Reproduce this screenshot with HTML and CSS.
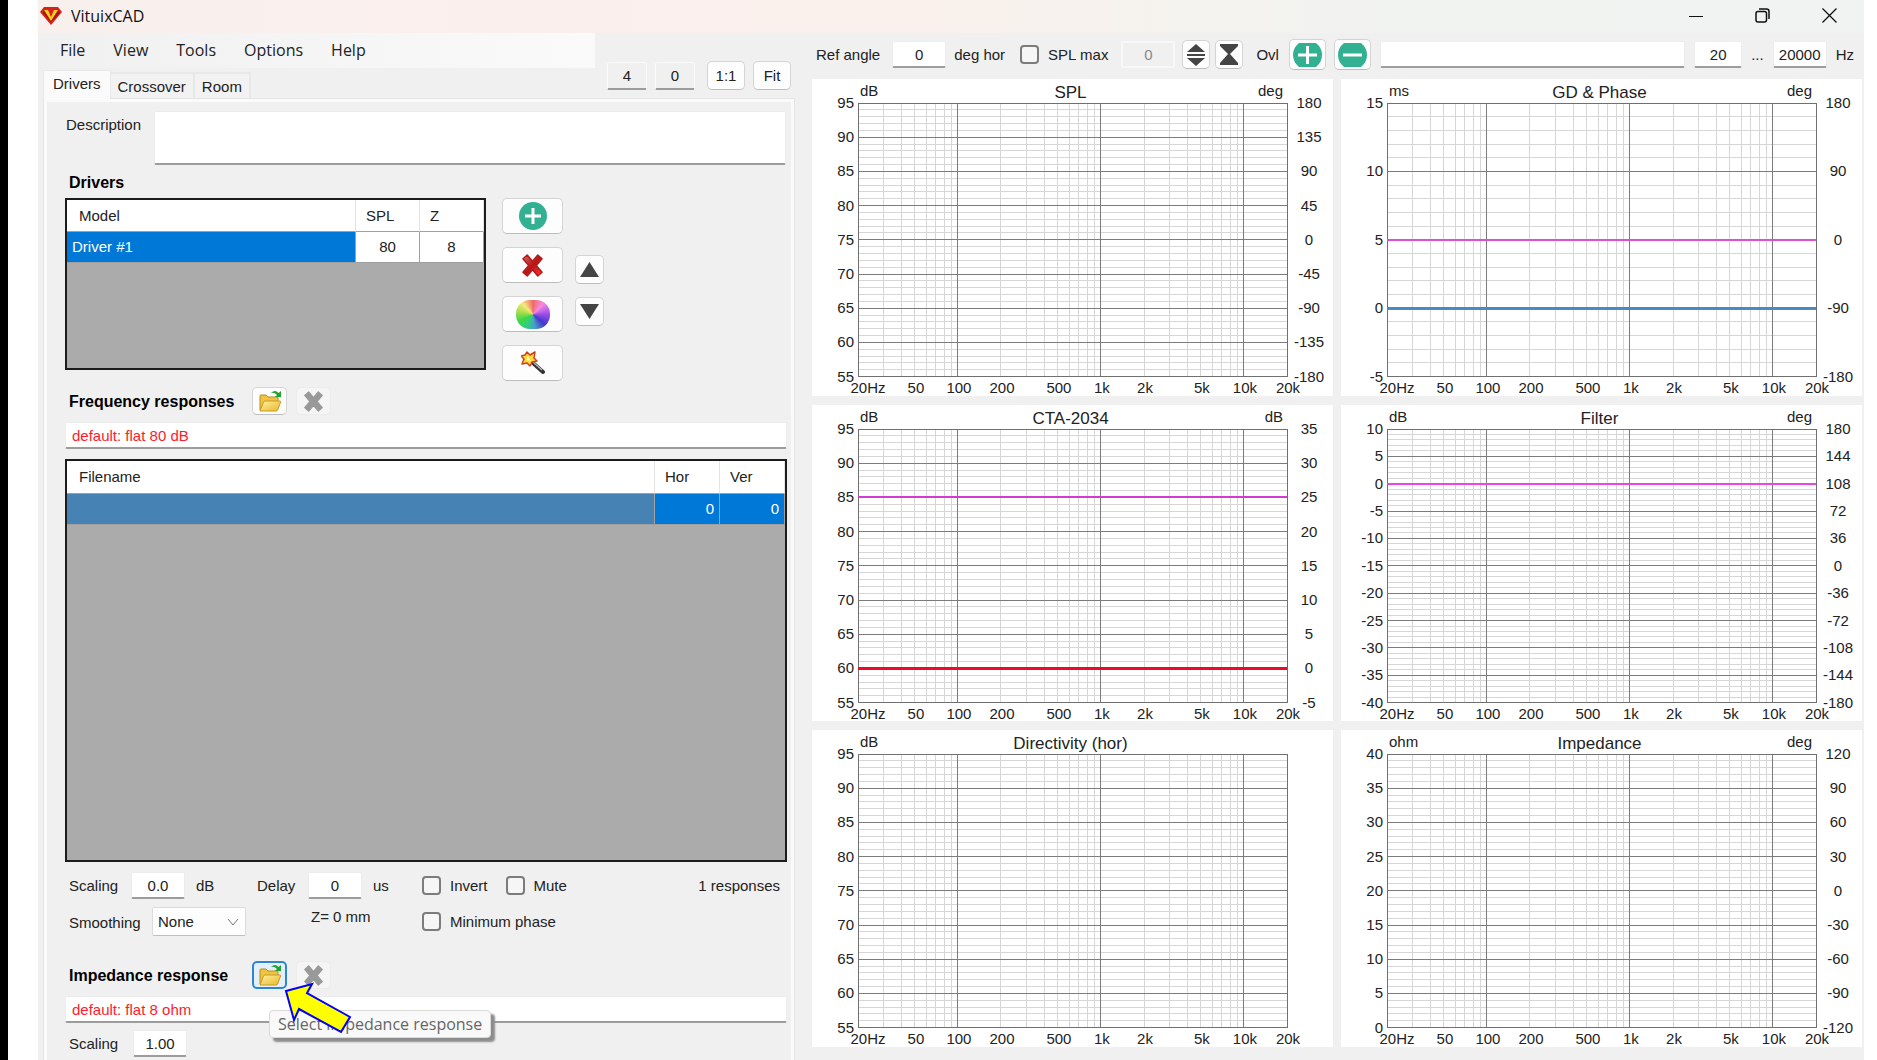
FILE: index.html
```html
<!DOCTYPE html>
<html lang="en">
<head>
<meta charset="utf-8">
<title>VituixCAD</title>
<link rel="stylesheet" href="styles.css">
</head>
<body>
<svg class="defs" aria-hidden="true">
  <linearGradient id="gold" x1="0" y1="0" x2="1" y2="1"><stop offset="0" stop-color="#fff3a0"/><stop offset="1" stop-color="#eab52a"/></linearGradient>
  <linearGradient id="red" x1="0" y1="0" x2="1" y2="1"><stop offset="0" stop-color="#d86a68"/><stop offset=".5" stop-color="#b81414"/><stop offset="1" stop-color="#ff3a3a"/></linearGradient>
  <symbol id="folder" viewBox="0 0 24 24">
    <path d="M2 21V7q0-1 1-1h5l2 2h9q1 0 1 1v3" fill="#f0c440" stroke="#b98d1e"/>
    <path d="M2 22 5.500 13q.4-1 1.500-1h15q1 0 .6 1l-3 8q-.4 1-1.500 1z" fill="url(#gold)" stroke="#c79a22"/>
    <path d="M13 4q4-4 7.500 0L23 2v6h-6l2-2q-2.500-3-6-2z" fill="#1fa32c"/>
  </symbol>
  <symbol id="cross" viewBox="0 0 24 24">
    <path d="M2 5 6.500 1 12 7.500 17.500 1 22 5 16 12l6 7-4.500 4-5.500-6.500L6.500 23 2 19l6-7z" stroke-linejoin="round" stroke-width="1.500" stroke="currentColor"/>
  </symbol>
</svg>
<div class="window">
  <header class="titlebar">
    <svg class="logo" viewBox="0 0 22 18"><path d="M4 0h14l4 5-11 13L0 5z" fill="#d8201c"/><path d="M4 3h14l2 3-9 9-8-9z" fill="#a8120e"/><path d="M4 3h5l2 6 2-6h5l-7 11z" fill="#f6d21c"/><path d="M8 3h6l-3 7z" fill="#d8201c"/></svg>
    <h1 class="title">VituixCAD</h1>
    <div class="winbtns">
      <button aria-label="Minimize"><svg width="14" height="14"><path d="M0 7.500h14" stroke="#111"/></svg></button>
      <button aria-label="Restore"><svg width="15" height="15" fill="none" stroke="#111" stroke-width="1.500"><rect x="1" y="3.500" width="10.500" height="10.500" rx="2"/><path d="M4 1h7.500q2.500 0 2.500 2.500V11"/></svg></button>
      <button aria-label="Close"><svg width="15" height="15"><path d="M.5.5l14 14M14.500.5l-14 14" stroke="#111" stroke-width="1.300"/></svg></button>
    </div>
  </header>
  <div class="workspace">
    <section class="left">
      <div class="top">
        <div class="navs">
          <nav class="menu"><a href="#file">File</a><a href="#view">View</a><a href="#tools">Tools</a><a href="#options">Options</a><a href="#help">Help</a></nav>
          <div class="tabs" role="tablist">
            <button class="tab active" role="tab" aria-selected="true">Drivers</button><button class="tab" role="tab">Crossover</button><button class="tab" role="tab">Room</button>
          </div>
        </div>
        <div class="zoomers">
          <input class="field grey" aria-label="Columns" value="4"><input class="field grey" aria-label="Rows" value="0">
          <button class="btn one">1:1</button><button class="btn">Fit</button>
        </div>
      </div>
      <div class="panel">
        <div class="description"><label for="desc">Description</label><textarea id="desc" class="field"></textarea></div>
        <h2 class="heading solo">Drivers</h2>
        <div class="drivers">
          <div class="grid driver-grid">
            <table>
              <colgroup><col><col class="c-spl"><col class="c-z"></colgroup>
              <thead><tr><th>Model</th><th>SPL</th><th>Z</th></tr></thead>
              <tbody><tr><td class="sel">Driver #1</td><td class="mid">80</td><td class="mid">8</td></tr></tbody>
            </table>
          </div>
          <div class="actions">
            <button class="btn" aria-label="Add driver"><svg width="28" height="28"><circle cx="14" cy="14" r="14" fill="#32b092"/><path d="M14 6v16M6 14h16" stroke="#fff" stroke-width="3"/></svg></button>
            <button class="btn danger" aria-label="Delete driver"><svg width="23" height="23"><use href="#cross" fill="url(#red)"/></svg></button>
            <button class="btn" aria-label="Colour"><span class="wheel"></span></button>
            <button class="btn" aria-label="Optimize"><svg width="24" height="24" viewBox="0 0 24 24"><path d="M12 12l10 9" stroke="#333" stroke-width="4" stroke-linecap="round"/><path d="M12 11l9 8" stroke="#b5b5b5" stroke-width="1.500"/><path d="M6 1l3 3 5-3-1 6 3 3-5 1-2 4-3-3-5 1 2-5-3-3 4-1z" fill="#ffd83a" stroke="#cf3f22" stroke-width="1.500" stroke-linejoin="round"/><path d="M7 5l3 5-5-1z" fill="#fff7b0"/></svg></button>
          </div>
          <div class="movers">
            <button class="btn" aria-label="Move up"><svg width="19" height="15"><path d="M9.500 0 19 15H0z" fill="#444"/></svg></button>
            <button class="btn" aria-label="Move down"><svg width="19" height="15"><path d="M0 0h19L9.500 15z" fill="#444"/></svg></button>
          </div>
        </div>
        <div class="heading-row">
          <h2 class="heading">Frequency responses</h2>
          <button class="btn file" aria-label="Open responses"><svg width="24" height="24"><use href="#folder"/></svg></button>
          <button class="btn file off" disabled aria-label="Clear responses"><svg width="23" height="21"><use href="#cross"/></svg></button>
        </div>
        <input class="field path" aria-label="Frequency response" value="default: flat 80 dB">
        <div class="grid response-grid">
          <table>
            <colgroup><col><col class="c-ang"><col class="c-ang"></colgroup>
            <thead><tr><th>Filename</th><th>Hor</th><th>Ver</th></tr></thead>
            <tbody><tr><td class="steel"></td><td class="sel num">0</td><td class="sel num">0</td></tr></tbody>
          </table>
        </div>
        <div class="controls">
          <div class="ga"><label for="sc" class="lbl">Scaling</label><input id="sc" class="field n54" value="0.0"><span class="unit">dB</span></div>
          <div class="gb"><label for="dl" class="delay">Delay</label><input id="dl" class="field n54" value="0"><span class="unit">us</span></div>
          <label class="check"><input type="checkbox">Invert</label>
          <label class="check"><input type="checkbox">Mute</label>
          <output class="count">1 responses</output>
        </div>
        <div class="controls second">
          <div class="ga"><label for="sm" class="lbl wide">Smoothing</label><select id="sm" class="select"><option>None</option></select></div>
          <div class="gb"><output class="zmm">Z= 0 mm</output></div>
          <label class="check"><input type="checkbox">Minimum phase</label>
        </div>
        <div class="heading-row impedance">
          <h2 class="heading">Impedance response</h2>
          <button class="btn file hot" aria-label="Select impedance response"><svg width="24" height="24"><use href="#folder"/></svg></button>
          <button class="btn file off" disabled aria-label="Clear impedance"><svg width="23" height="21"><use href="#cross"/></svg></button>
          <div class="tooltip" role="tooltip">Select impedance response</div>
          <svg class="arrow" width="70" height="54"><path d="M3 10 29 3 24 12 67 36 58 51 16 28 11 39z" fill="#ff0" stroke="#00f" stroke-width="2"/></svg>
        </div>
        <input class="field path" aria-label="Impedance response" value="default: flat 8 ohm">
        <div class="controls"><div class="ga"><label for="is" class="lbl imp">Scaling</label><input id="is" class="field n54" value="1.00"></div></div>
      </div>
    </section>
    <section class="right">
      <div class="toolbar">
        <label for="ref">Ref angle</label><input id="ref" class="field n54 ref" value="0"><span class="deg">deg hor</span>
        <label class="check"><input type="checkbox">SPL max</label>
        <input class="field n54 disabled" aria-label="SPL maximum" value="0" disabled>
        <button class="btn mini first" aria-label="Expand"><svg width="20" height="22" fill="#444"><path d="M10 0l9 8H1zM1 10h18v2H1zM1 14h18l-9 8z"/></svg></button>
        <button class="btn mini" aria-label="Compress"><svg width="20" height="22" fill="#444"><path d="M1 0h18v2l-8 8 8 9v2H1v-2l8-9-8-8z"/></svg></button>
        <span class="ovl">Ovl</span>
        <button class="btn round" aria-label="Add overlay"><svg width="29" height="24"><path d="M6 0h17q6 5 6 12t-6 12H6q-6-5-6-12T6 0z" fill="#32b092"/><path d="M14.500 3v18M5 12h19" stroke="#fff" stroke-width="3"/></svg></button>
        <button class="btn round" aria-label="Remove overlay"><svg width="29" height="24"><path d="M6 0h17q6 5 6 12t-6 12H6q-6-5-6-12T6 0z" fill="#32b092"/><path d="M5 12h19" stroke="#fff" stroke-width="3"/></svg></button>
        <input class="field grow" aria-label="Overlay name">
        <input class="field n48" aria-label="Minimum frequency" value="20"><span class="dots">...</span><input class="field n54" aria-label="Maximum frequency" value="20000"><span class="hz">Hz</span>
      </div>
      <div class="charts" id="charts"></div>
    </section>
  </div>
</div>
<script src="charts.js"></script>
</body>
</html>
```
FILE: styles.css
```css
* { box-sizing: border-box; }
body {
  margin: 0; height: 100vh; overflow: hidden; background: #fff;
  border-left: 8px solid #000; padding: 0 13px 0 30px;
  font: 15px/20px "Liberation Sans", Arial, sans-serif; color: #222;
}
button, input, select, textarea { font: inherit; color: inherit; margin: 0; }
button { padding: 0; }
svg { display: block; }
.defs { position: absolute; width: 0; height: 0; }
.window { height: 100%; background: #f0f0f0; display: flex; flex-direction: column; }
.titlebar {
  flex: none; height: 33px; display: flex; align-items: center; padding: 0 27px 2px 2px;
  background: linear-gradient(90deg, #f8f0ed, #fbefed 30%, #f9f1ec 50%, #f2f3f0 70%, #f0f3f2);
}
.logo { width: 22px; height: 18px; }
.title { margin: 0 auto 0 9px; font: 16px/20px "Open Sans", sans-serif; color: #111; }
.winbtns { display: flex; gap: 24px; }
.winbtns button { width: 43px; height: 30px; border: 0; background: none; display: grid; place-items: center; }
.winbtns button:last-child { margin-right: -14px; }
.workspace { flex: 1; min-height: 0; display: grid; grid-template-columns: minmax(0, 774fr) minmax(0, 1052fr); }

.left { min-height: 0; overflow: hidden; padding: 0 17px 0 0; }
.top { display: flex; height: 65px; }
.navs { flex: 1; display: flex; flex-direction: column; justify-content: space-between; }
.menu {
  height: 35px; margin-right: 12px; padding: 0 0 2px 22px; display: flex; align-items: center; gap: 28px;
  background: linear-gradient(90deg, #f0f0f0, #fafafa); font: 16px/20px "Open Sans", sans-serif;
}
.menu a { color: #222; text-decoration: none; }
.tabs { display: flex; align-items: flex-end; padding-left: 5px; }
.tab { height: 26px; padding: 1px 7px 0; background: #f2f2f2; border: 2px solid #e8e8e8; border-bottom: 0; border-left-width: 0; }
.tab.active { height: 29px; margin-bottom: -1px; padding: 0 9px 3px; background: #fafafa; border: 1px solid #e8e8e8; border-bottom: 0; position: relative; }
.zoomers { display: flex; align-items: flex-end; gap: 8px; padding: 0 4px 8px 0; }
.zoomers .field { width: 40px; height: 28px; }
.zoomers .btn { width: 38px; height: 29px; }
.zoomers .one { margin-left: 4px; }
.panel { margin-left: 5px; height: 1000px; border: 1px solid #e4e4e4; box-shadow: inset 3px 3px 0 #fafafa, inset -3px 0 0 #fafafa; padding: 12px 7px 0 21px; }

.field {
  border: 1px solid #ececec; border-bottom: 2px solid #9c9c9c; border-radius: 2px; background: #fff;
  height: 27px; padding: 0 4px; text-align: center; min-width: 0; outline: none;
}
.field.grey { background: #f0f0f0; border-color: #fafafa #fafafa #9c9c9c; }
.field.disabled { background: #f0f0f0; color: #888; border: 2px solid #f8f8f8; }
.n54 { width: 54px; }
.n48 { width: 48px; }
.btn {
  background: #fdfdfd; border: 1px solid #d4d4d4; border-bottom-color: #bdbdbd; border-radius: 5px;
  display: grid; place-items: center;
}
.description { display: flex; padding-right: 1px; }
.description label { width: 89px; padding: 4px 0 0 1px; }
.description textarea { flex: 1; height: 54px; resize: none; }
.heading { margin: 0; font-size: 16px; line-height: 20px; font-weight: bold; color: #000; padding-left: 4px; }
.solo { margin: 8px 0 5px; }
.grid { background: #ababab; border: 2px solid #1c1c1c; }
.grid table { width: 100%; table-layout: fixed; border-collapse: separate; border-spacing: 0; background: #fff; }
.grid th { height: 32px; padding: 0 12px; text-align: left; font-weight: normal; border-right: 1px solid #e4e4e4; border-bottom: 1px solid #a0a0a0; }
.response-grid th { height: 33px; }
.grid td { height: 31px; padding: 0 5px; border-right: 1px solid #a0a0a0; border-bottom: 1px solid #a0a0a0; }
.grid td.sel { background: #0078d7; color: #fff; }
.grid td.steel { background: #4682b4; }
.grid td.mid { text-align: center; }
.grid td.num { text-align: right; }
.grid th:nth-child(n+2) { padding: 0 10px; }
.c-spl, .c-z { width: 64px; }
.c-ang { width: 65px; }
.drivers { display: flex; }
.driver-grid { flex: 0 1 421px; height: 172px; }
.actions { margin-left: 16px; display: flex; flex-direction: column; gap: 13px; }
.actions .btn { width: 61px; height: 36px; }
.danger { color: #b01c1c; }
.wheel {
  width: 34px; height: 29px; border-radius: 14px;
  background: conic-gradient(from 0deg, #f06a6a, #f58ae0 12%, #a050e8 24%, #4238cc 36%, #48a0c8 48%, #30cf80 58%, #3ed648 68%, #b8e050 80%, #f5e87a 88%, #f06a6a);
}
.movers { margin: 57px 0 0 12px; display: flex; flex-direction: column; gap: 13px; }
.movers .btn { width: 29px; height: 29px; }
.heading-row { position: relative; display: flex; align-items: center; gap: 9px; height: 28px; margin: 6px 0 7px; }
.heading-row .heading { width: 178px; white-space: nowrap; padding-top: 2px; }
.file { width: 35px; height: 28px; }
.file.off { background: #f5f5f5; border-color: #ececec; color: #999; fill: #999; }
.file.hot { background: #e3f0fa; border: 2px solid #2f86d0; }
.path { display: block; width: 100%; text-align: left; color: #ff1a2c; padding: 0 6px; }
.response-grid { height: 403px; margin: 10px 0; }
.controls { display: flex; align-items: center; height: 27px; }
.second { height: 31px; margin-top: 7px; }
.ga, .gb { display: flex; align-items: center; }
.ga { width: 192px; }
.gb { width: 165px; }
.lbl { width: 66px; padding-left: 4px; }
.lbl.wide { width: 87px; padding-top: 2px; }
.lbl.imp { width: 68px; }
.unit { margin-left: 11px; }
.delay { width: 51px; }
.zmm { margin-left: 54px; padding-bottom: 10px; }
.check { display: flex; align-items: center; gap: 9px; }
.check input { appearance: none; width: 19px; height: 19px; border: 2px solid #7c7c7c; border-radius: 4px; background: #f6f6f6; }
.check + .check { margin-left: 18px; }
.count { margin-left: auto; padding-right: 7px; }
.select {
  width: 94px; height: 29px; appearance: none; padding: 0 5px; border: 1px solid #dcdcdc; border-bottom-color: #c0c0c0; border-radius: 2px;
  background: #fdfdfd url("data:image/svg+xml,%3Csvg xmlns='http://www.w3.org/2000/svg' width='12' height='8' fill='none' stroke='%23777'%3E%3Cpath d='M1 1l5 6 5-6'/%3E%3C/svg%3E") no-repeat right 6px center;
}
.impedance { margin-top: 24px; }
.tooltip {
  position: absolute; left: 204px; top: 49px; height: 28px; padding: 0 8px; white-space: nowrap;
  font: 16px/26px "Open Sans", sans-serif; color: #666; background: #f9f9f9; border: 1px solid #dadada; border-radius: 4px;
  box-shadow: 4px 4px 2px #8c8c8c;
}
.arrow { position: absolute; left: 218px; top: 20px; }
.impedance + .path + .controls { margin-top: 7px; }

.right { display: flex; flex-direction: column; min-height: 0; padding: 0 2px 13px 0; }
.toolbar { flex: none; height: 46px; display: flex; align-items: center; padding: 0 8px 3px 4px; white-space: nowrap; }
.toolbar > .field:not(.disabled) { margin-left: 9px; }
.toolbar > .ref:not(.disabled) { margin-left: 12px; }
.deg { margin: 0 15px 0 8px; }
.toolbar .disabled { margin-left: 13px; }
.mini { width: 28px; height: 29px; margin-left: 5px; }
.mini.first { margin-left: 7px; }
.ovl { margin-left: 13px; }
.round { width: 37px; height: 31px; margin-left: 8px; }
.ovl + .round { margin-left: 10px; }
.grow { flex: 1; }
.dots { margin-left: 9px; }
.hz { margin-left: 9px; }
.charts { flex: 1; min-height: 0; display: grid; grid-template: repeat(3, minmax(0, 1fr)) / repeat(2, minmax(0, 1fr)); gap: 9px 8px; }
.card { background: #fff; padding: 24px 46px 19px 46px; margin: 0; min-width: 0; }
.plot { width: 100%; height: 100%; overflow: visible; }
.plot text { fill: #222; font-size: 15px; }
.plot .name { font-size: 17px; text-anchor: middle; }
.end { text-anchor: end; }
.center { text-anchor: middle; }
.plot line, .plot rect { shape-rendering: crispEdges; }
.minor { stroke: #d6d6d6; }
.major { stroke: #7c7c7c; }
.frame { fill: none; stroke: #707070; }
```
FILE: charts.js
```js
// Frequency axis: 20 Hz to 20 kHz, logarithmic. All positions are percentages of the plot area.
const SPAN = Math.log10(1000);
const fx = f => (Math.log10(f / 20) / SPAN * 100).toFixed(3) + '%';
const ticks = [[20, '20Hz'], [50, '50'], [100, '100'], [200, '200'], [500, '500'], [1000, '1k'], [2000, '2k'], [5000, '5k'], [10000, '10k'], [20000, '20k']];
const range = (from, to, count) => Array.from({ length: count + 1 }, (_, i) => from + (to - from) * i / count);

const charts = [
  { name: 'SPL', unit: ['dB', 'deg'], left: range(95, 55, 8), right: range(180, -180, 8), curves: [] },
  { name: 'GD & Phase', unit: ['ms', 'deg'], left: range(15, -5, 4), right: range(180, -180, 4), curves: [[5, '#dd50d6'], [0, '#4a8abd', 3]] },
  { name: 'CTA-2034', unit: ['dB', 'dB'], left: range(95, 55, 8), right: range(35, -5, 8), curves: [[85, '#d03cd0'], [60, '#ee0a28', 3]] },
  { name: 'Filter', unit: ['dB', 'deg'], left: range(10, -40, 10), right: range(180, -180, 10), curves: [[0, '#ea46e6']] },
  { name: 'Directivity (hor)', unit: ['dB', ''], left: range(95, 55, 8), right: [], curves: [] },
  { name: 'Impedance', unit: ['ohm', 'deg'], left: range(40, 0, 8), right: range(120, -120, 8), curves: [] }
];

function draw(c) {
  const n = c.left.length - 1;
  const y = i => (i / n * 100).toFixed(3) + '%';
  let minor = '', major = '', text = '';
  for (const decade of [10, 100, 1000, 10000]) {
    for (let k = 1; k < 10; k++) {
      const f = decade * k;
      if (f <= 20 || f >= 20000) continue;
      const line = `<line class="${k === 1 ? 'major' : 'minor'}" x1="${fx(f)}" x2="${fx(f)}" y1="0" y2="100%"/>`;
      if (k === 1) major += line; else minor += line;
    }
  }
  for (let i = 1; i < n * 5; i++) {
    const kind = i % 5 ? 'minor' : 'major';
    const line = `<line class="${kind}" x1="0" x2="100%" y1="${y(i / 5)}" y2="${y(i / 5)}"/>`;
    if (i % 5) minor += line; else major += line;
  }
  c.left.forEach((v, i) => { text += `<text class="end" x="0" y="${y(i)}" dx="-4" dy="5">${v}</text>`; });
  c.right.forEach((v, i) => { text += `<text class="center" x="100%" y="${y(i)}" dx="22" dy="5">${v}</text>`; });
  ticks.forEach(([f, label]) => { text += `<text class="center" x="${fx(f)}" y="100%" dx="${f === 20 ? 10 : 1}" dy="16">${label}</text>`; });
  const curves = c.curves.map(([v, color, w]) => {
    const pos = y((c.left[0] - v) / (c.left[0] - c.left[1]));
    return `<line x1="0" x2="100%" y1="${pos}" y2="${pos}" stroke="${color}" stroke-width="${w || 2}"/>`;
  }).join('');
  return `<figure class="card"><svg class="plot">${minor}${major}<rect class="frame" width="100%" height="100%"/>${curves}${text}` +
    `<text x="0" y="0" dx="2" dy="-7">${c.unit[0]}</text><text class="end" x="100%" y="0" dx="-4" dy="-7">${c.unit[1]}</text>` +
    `<text class="name" x="50%" y="0" dx="-2" dy="-5">${c.name.replace('&', '&amp;')}</text></svg></figure>`;
}

document.getElementById('charts').innerHTML = charts.map(draw).join('');
```
